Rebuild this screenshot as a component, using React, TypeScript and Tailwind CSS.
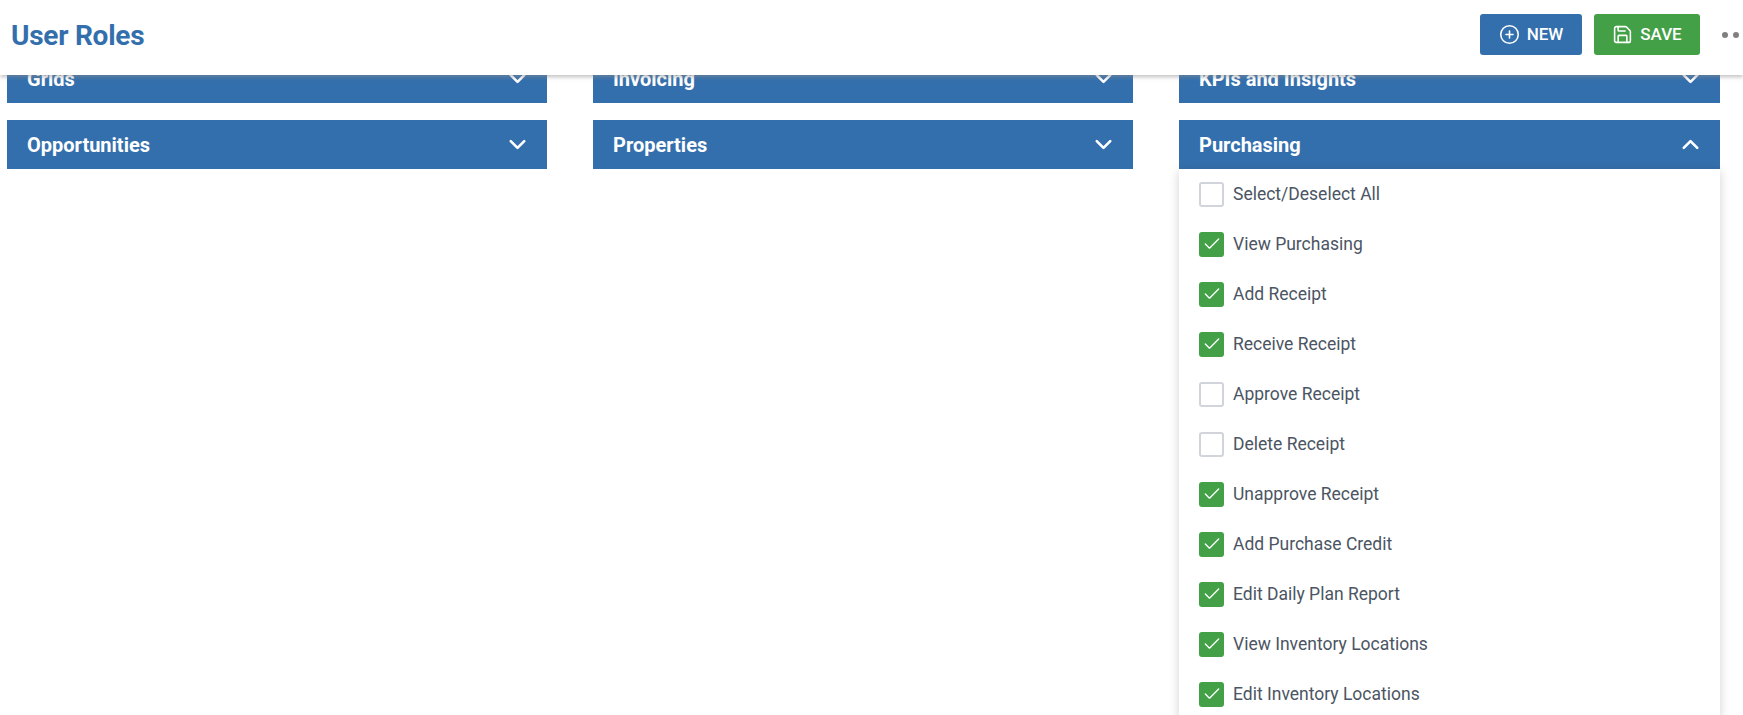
import React from 'react';
import { ChevronDown, ChevronUp, CirclePlus, Save, Check } from 'lucide-react';

const permissions = [
  { label: 'Select/Deselect All', on: false },
  { label: 'View Purchasing', on: true },
  { label: 'Add Receipt', on: true },
  { label: 'Receive Receipt', on: true },
  { label: 'Approve Receipt', on: false },
  { label: 'Delete Receipt', on: false },
  { label: 'Unapprove Receipt', on: true },
  { label: 'Add Purchase Credit', on: true },
  { label: 'Edit Daily Plan Report', on: true },
  { label: 'View Inventory Locations', on: true },
  { label: 'Edit Inventory Locations', on: true },
];

const SectionBar = ({ title, open = false }: { title: string; open?: boolean }) => (
  <div className="flex h-[49px] items-center justify-between bg-[#346fad] pl-5 pr-[16px] text-white">
    <span className="text-[20px] font-bold">{title}</span>
    {open ? <ChevronUp size={27} strokeWidth={2.3} /> : <ChevronDown size={27} strokeWidth={2.3} />}
  </div>
);

const PermissionRow = ({ label, on }: { label: string; on: boolean }) => (
  <div className="flex h-[50px] items-center gap-[9px]">
    {on ? (
      <span className="flex h-[25px] w-[25px] items-center justify-center rounded-[3px] bg-[#43a047] text-white">
        <Check size={20} strokeWidth={1.6} />
      </span>
    ) : (
      <span className="h-[25px] w-[25px] rounded-[3px] border-2 border-[#d1d5db] bg-white" />
    )}
    <span className="text-[17.5px] text-[#4b5563]">{label}</span>
  </div>
);

export default function App() {
  return (
    <div className="relative h-[715px] overflow-hidden bg-white font-['Roboto',sans-serif]">
      {/* Top bar sits over the scrolled content */}
      <header className="absolute inset-x-0 top-0 z-10 flex h-[75px] items-center justify-between bg-white pl-[11px] shadow-[0_2px_4px_rgba(140,140,140,0.55)]">
        <h1 className="mb-[4px] text-[28px] font-bold tracking-[-0.25px] text-[#346fad]">User Roles</h1>
        <div className="mb-[6px] flex items-center">
          <button className="mr-3 flex h-[41px] w-[102px] items-center justify-center gap-[7px] rounded-[3px] bg-[#346fad] text-[17px] font-medium text-white">
            <CirclePlus size={21} strokeWidth={1.8} />
            NEW
          </button>
          <button className="flex h-[41px] w-[106px] items-center justify-center gap-[7px] rounded-[3px] bg-[#43a047] text-[17px] font-medium text-white">
            <Save size={21} strokeWidth={1.8} />
            SAVE
          </button>
          <div className="ml-[22px] mr-[-7px] flex gap-[5px]">
            <span className="h-[6px] w-[6px] rounded-full bg-[#808080]" />
            <span className="h-[6px] w-[6px] rounded-full bg-[#808080]" />
            <span className="h-[6px] w-[6px] rounded-full bg-[#808080]" />
          </div>
        </div>
      </header>

      <main className="grid grid-cols-[540px_540px_541px] gap-x-[46px] pl-[7px] pt-[54px]">
        <div className="flex flex-col gap-[17px]">
          <SectionBar title="Grids" />
          <SectionBar title="Opportunities" />
        </div>
        <div className="flex flex-col gap-[17px]">
          <SectionBar title="Invoicing" />
          <SectionBar title="Properties" />
        </div>
        <div className="flex flex-col gap-[17px]">
          <SectionBar title="KPIs and Insights" />
          <div>
            <SectionBar title="Purchasing" open />
            <div className="bg-white pl-5 shadow-[0_2px_10px_rgba(0,0,0,0.18)]">
              {permissions.map((p) => (
                <PermissionRow key={p.label} label={p.label} on={p.on} />
              ))}
            </div>
          </div>
        </div>
      </main>
    </div>
  );
}
